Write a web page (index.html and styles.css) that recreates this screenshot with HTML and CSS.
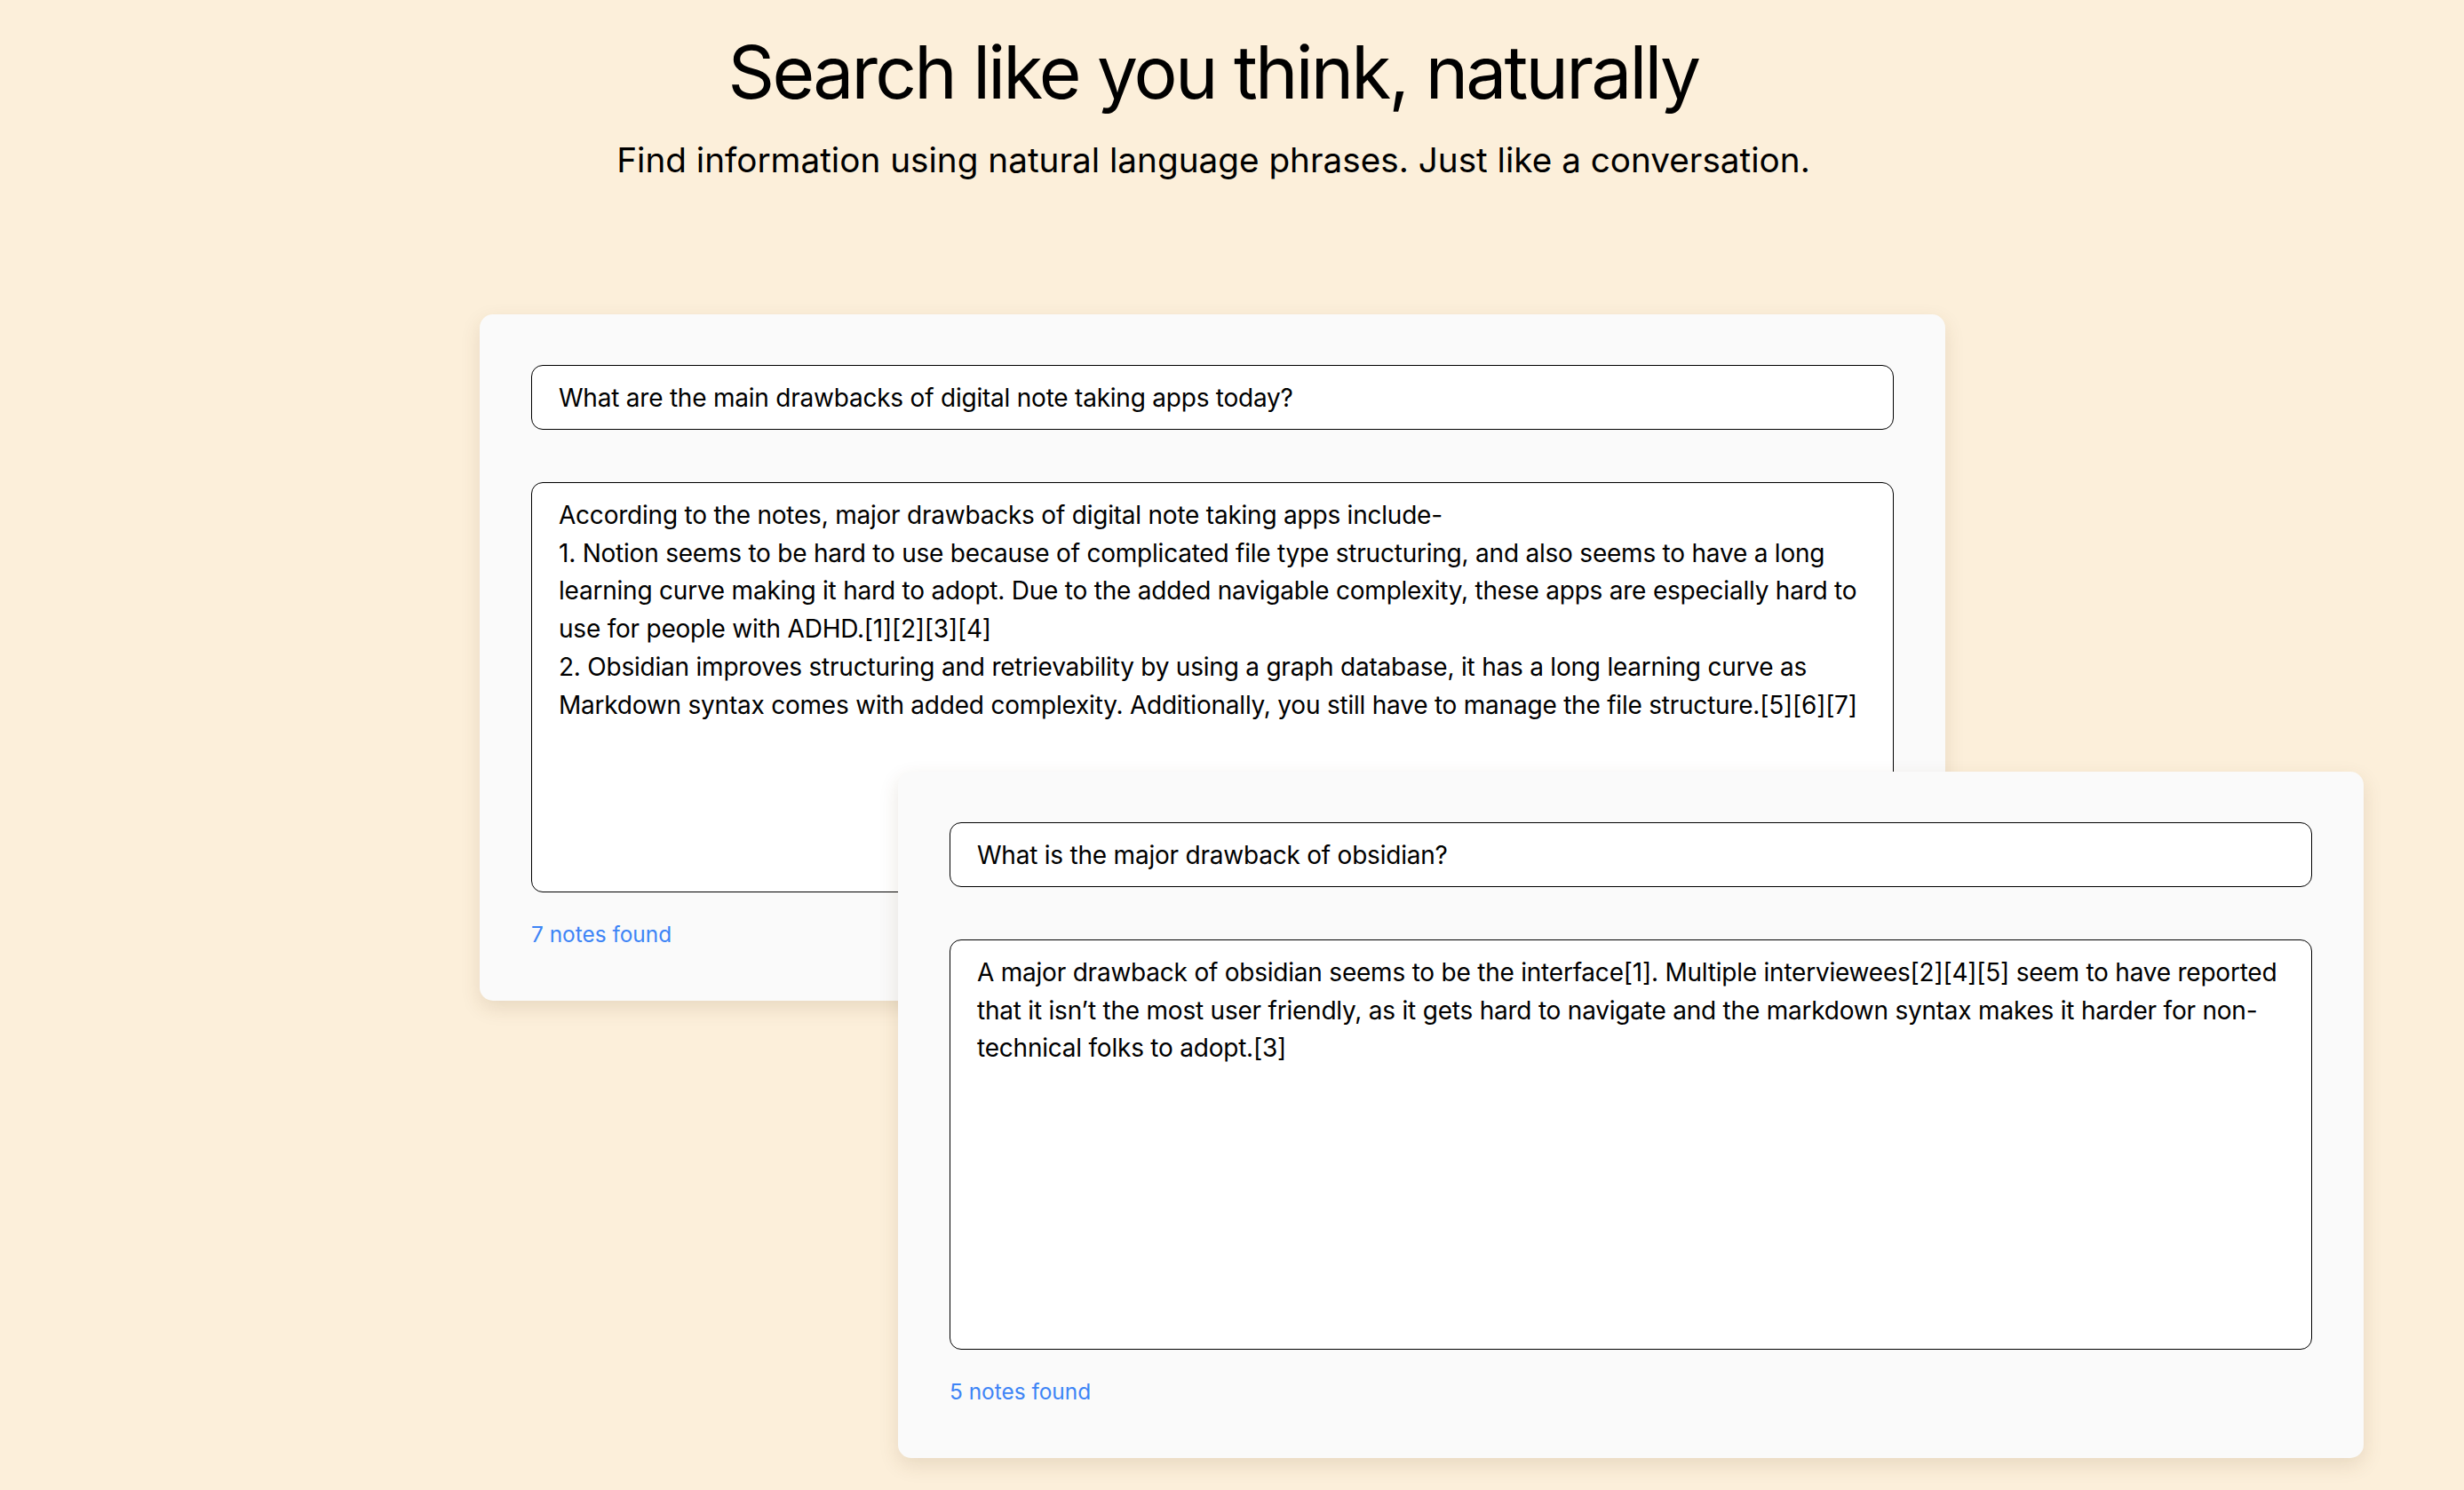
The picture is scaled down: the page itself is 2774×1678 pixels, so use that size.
FILE: index.html
```html
<!DOCTYPE html>
<html lang="en">
<head>
<meta charset="utf-8">
<title>Search like you think, naturally</title>
<link rel="stylesheet" href="styles.css">
</head>
<body>
  <header class="hero">
    <h1 class="hero-title">Search like you think, naturally</h1>
    <p class="hero-sub">Find information using natural language phrases. Just like a conversation.</p>
  </header>

  <main class="stage">
    <section class="card card-first">
      <div class="query">What are the main drawbacks of digital note taking apps today?</div>
      <div class="answer">
        <span class="line">According to the notes, major drawbacks of digital note taking apps include-</span>
        <span class="line">1. Notion seems to be hard to use because of complicated file type structuring, and also seems to have a long</span>
        <span class="line">learning curve making it hard to adopt. Due to the added navigable complexity, these apps are especially hard to</span>
        <span class="line">use for people with ADHD.[1][2][3][4]</span>
        <span class="line">2. Obsidian improves structuring and retrievability by using a graph database, it has a long learning curve as</span>
        <span class="line">Markdown syntax comes with added complexity. Additionally, you still have to manage the file structure.[5][6][7]</span>
      </div>
      <div class="found">7 notes found</div>
    </section>

    <section class="card card-second">
      <div class="query">What is the major drawback of obsidian?</div>
      <div class="answer">
        <span class="line">A major drawback of obsidian seems to be the interface[1]. Multiple interviewees[2][4][5] seem to have reported</span>
        <span class="line">that it isn’t the most user friendly, as it gets hard to navigate and the markdown syntax makes it harder for non-</span>
        <span class="line">technical folks to adopt.[3]</span>
      </div>
      <div class="found">5 notes found</div>
    </section>
  </main>
</body>
</html>
```

FILE: styles.css
```css
* { box-sizing: border-box; }

html, body {
  margin: 0;
  padding: 0;
}

body {
  background: #fcefda;
  color: #000;
  font-family: Inter, "Noto Sans", "Liberation Sans", sans-serif;
  width: 2774px;
  height: 1678px;
  overflow: hidden;
}

.hero {
  width: 2732px;
  padding-top: 32px;
  text-align: center;
}

.hero-title {
  margin: 0;
  font-size: 82px;
  line-height: 100px;
  font-weight: 400;
  letter-spacing: -2.8px;
}

.hero-sub {
  margin: 26px 0 0;
  font-size: 38.7px;
  line-height: 44px;
  font-weight: 400;
  letter-spacing: 0;
}

.stage {
  margin-top: 152px;
  margin-left: 540px;
  display: grid;
  grid-template-columns: 471px 1179px 471px;
  grid-template-rows: 515px 258px auto;
}

.card {
  background: #fafafa;
  border-radius: 15px;
  padding: 57px 58px 57px;
  box-shadow: 0 8px 22px rgba(90, 60, 20, 0.13);
  display: flex;
  flex-direction: column;
}

.card-first {
  grid-column: 1 / 3;
  grid-row: 1 / 3;
}

.card-second {
  grid-column: 2 / 4;
  grid-row: 2 / 4;
}

.query {
  background: #fff;
  border: 1px solid #000;
  border-radius: 13px;
  padding: 20px 30px 18px;
  font-size: 28px;
  line-height: 33px;
  letter-spacing: -0.22px;
  white-space: nowrap;
}

.answer {
  margin-top: 59px;
  height: 462px;
  background: #fff;
  border: 1px solid #000;
  border-radius: 13px;
  padding: 15px 30px;
  font-size: 28px;
  line-height: 42.7px;
  letter-spacing: -0.22px;
}

.line {
  display: block;
  white-space: nowrap;
}

.found {
  margin-top: 29px;
  font-size: 24.4px;
  line-height: 36px;
  color: #3d84f6;
}
```
